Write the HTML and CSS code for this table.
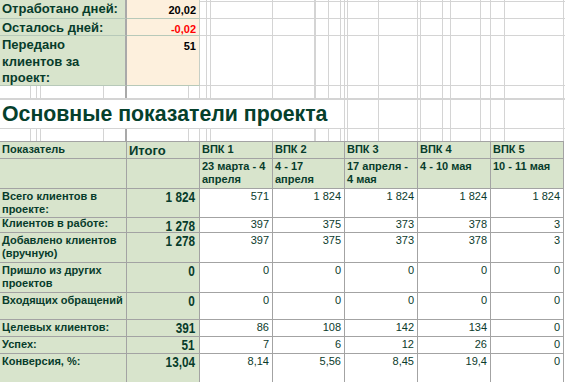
FILE: index.html
```html
<!DOCTYPE html>
<html lang="ru">
<head>
<meta charset="utf-8">
<title>Основные показатели проекта</title>
<link rel="stylesheet" href="styles.css">
</head>
<body>
<div class="sheet">
  <div class="top">
    <div class="lbl">Отработано дней:</div><div class="val">20,02</div>
    <div class="lbl">Осталось дней:</div><div class="val neg">-0,02</div>
    <div class="lbl multi">Передано<br>клиентов за<br>проект:</div><div class="val">51</div>
  </div>
  <div class="gap-a"></div>
  <h1 class="title">Основные показатели проекта</h1>
  <div class="gap-b"></div>
  <div class="tbl">
    <div class="c g">Показатель</div><div class="c g hd-total">Итого</div><div class="c g">ВПК 1</div><div class="c g">ВПК 2</div><div class="c g">ВПК 3</div><div class="c g">ВПК 4</div><div class="c g">ВПК 5</div>

    <div class="c g"></div><div class="c g"></div><div class="c g">23 марта - 4<br>апреля</div><div class="c g">4 - 17<br>апреля</div><div class="c g">17 апреля -<br>4 мая</div><div class="c g">4 - 10 мая</div><div class="c g">10 - 11 мая</div>

    <div class="c g">Всего клиентов в<br>проекте:</div><div class="c g t"><span>1 824</span></div><div class="c n">571</div><div class="c n">1 824</div><div class="c n">1 824</div><div class="c n">1 824</div><div class="c n">1 824</div>

    <div class="c g tight">Клиентов в работе:</div><div class="c g t"><span>1 278</span></div><div class="c n tight">397</div><div class="c n tight">375</div><div class="c n tight">373</div><div class="c n tight">378</div><div class="c n tight">3</div>

    <div class="c g">Добавлено клиентов<br>(вручную)</div><div class="c g t"><span>1 278</span></div><div class="c n">397</div><div class="c n">375</div><div class="c n">373</div><div class="c n">378</div><div class="c n">3</div>

    <div class="c g">Пришло из других<br>проектов</div><div class="c g t"><span>0</span></div><div class="c n">0</div><div class="c n">0</div><div class="c n">0</div><div class="c n">0</div><div class="c n">0</div>

    <div class="c g">Входящих обращений</div><div class="c g t"><span>0</span></div><div class="c n">0</div><div class="c n">0</div><div class="c n">0</div><div class="c n">0</div><div class="c n">0</div>

    <div class="c g">Целевых клиентов:</div><div class="c g t"><span>391</span></div><div class="c n">86</div><div class="c n">108</div><div class="c n">142</div><div class="c n">134</div><div class="c n">0</div>

    <div class="c g">Успех:</div><div class="c g t"><span>51</span></div><div class="c n">7</div><div class="c n">6</div><div class="c n">12</div><div class="c n">26</div><div class="c n">0</div>

    <div class="c g">Конверсия, %:</div><div class="c g t"><span>13,04</span></div><div class="c n">8,14</div><div class="c n">5,56</div><div class="c n">8,45</div><div class="c n">19,4</div><div class="c n">0</div>
  </div>
</div>
</body>
</html>
```
FILE: styles.css
```css
html, body {
  margin: 0;
  padding: 0;
  background: #ffffff;
}

.sheet {
  --gl: linear-gradient(#d4d4d4, #d4d4d4);
  --gd: linear-gradient(#a9a9a9, #a9a9a9);
  width: 565px;
  height: 382px;
  overflow: hidden;
  font-family: "Liberation Sans", Arial, sans-serif;
  color: #073c2b;
  background:
    /* horizontal sheet gridlines */
    var(--gl) 0 1px / 100% 1px no-repeat,
    var(--gl) 0 18px / 100% 1px no-repeat,
    var(--gl) 0 35px / 100% 1px no-repeat,
    var(--gl) 0 85px / 100% 1px no-repeat,
    var(--gl) 0 98px / 100% 2px no-repeat,
    var(--gl) 0 128px / 100% 1px no-repeat,
    /* vertical sheet gridlines */
    var(--gl) 30px 0 / 1px 100% no-repeat,
    var(--gl) 36px 0 / 1px 100% no-repeat,
    var(--gl) 40px 0 / 1px 100% no-repeat,
    var(--gl) 103px 0 / 1px 100% no-repeat,
    var(--gd) 125px 0 / 2px 100% no-repeat,
    var(--gl) 188px 0 / 1px 100% no-repeat,
    var(--gl) 199px 0 / 1px 100% no-repeat,
    var(--gl) 206px 0 / 1px 100% no-repeat,
    var(--gl) 210px 0 / 1px 100% no-repeat,
    var(--gl) 272px 0 / 1px 100% no-repeat,
    var(--gl) 314px 0 / 2px 100% no-repeat,
    var(--gl) 328px 0 / 1px 100% no-repeat,
    var(--gl) 340px 0 / 1px 100% no-repeat,
    var(--gl) 344px 0 / 1px 100% no-repeat,
    var(--gl) 347px 0 / 1px 100% no-repeat,
    var(--gl) 378px 0 / 1px 100% no-repeat,
    var(--gl) 417px 0 / 1px 100% no-repeat,
    var(--gl) 420px 0 / 1px 100% no-repeat,
    var(--gl) 442px 0 / 1px 100% no-repeat,
    var(--gl) 450px 0 / 1px 100% no-repeat,
    var(--gl) 480px 0 / 1px 100% no-repeat,
    var(--gl) 490px 0 / 1px 100% no-repeat,
    var(--gl) 504px 0 / 1px 100% no-repeat,
    var(--gl) 563px 0 / 1px 100% no-repeat,
    #ffffff;
}

/* ---------- top summary block ---------- */
.top {
  display: grid;
  grid-template-columns: 127px 73px;
  grid-template-rows: 19px 17px 50px;
  width: 200px;
}

.top .lbl {
  box-sizing: border-box;
  background: #d8e4cc;
  border-right: 2px solid #a9a9a9;
  border-bottom: 1px solid #b7c9b9;
  padding: 1px 0 0 2px;
  font-weight: bold;
  font-size: 13px;
  line-height: 16px;
  white-space: nowrap;
}

.top .lbl.multi {
  line-height: 16.5px;
}

.top .val {
  box-sizing: border-box;
  background: #fdf0dd;
  border-right: 1px solid #c6cfc6;
  border-bottom: 1px solid #b7c9b9;
  padding: 3px 3px 0 0;
  text-align: right;
  font-weight: bold;
  font-size: 11px;
  line-height: 14px;
  color: #000000;
}

.top .val.neg {
  color: #ff0000;
}

.gap-a {
  height: 14px;
}

.title {
  margin: 0;
  width: 343px;
  height: 28px;
  background: #ffffff;
  padding-left: 2px;
  box-sizing: border-box;
  font-size: 21.3px;
  line-height: 28px;
  font-weight: bold;
  white-space: nowrap;
  color: #05402c;
}

.gap-b {
  height: 13px;
}

/* ---------- main table ---------- */
.tbl {
  display: grid;
  grid-template-columns: 127px 73px 73px 72px 73px 73px 73px;
  grid-template-rows: 17px 30px 29px 15px 30px 30px 27px 17px 17px 40px;
  width: 564px;
  border-top: 1px solid #a3a3a3;
  background: #ffffff;
}

.c {
  box-sizing: border-box;
  border-right: 1px solid #a3a3a3;
  border-bottom: 1px solid #a3a3a3;
  padding: 1px 2px 0 2px;
  font-size: 11px;
  line-height: 13px;
  font-weight: bold;
  white-space: nowrap;
  background: #ffffff;
}

.g {
  background: #d8e4cc;
}

.hd-total {
  font-size: 13px;
  line-height: 14px;
  padding-top: 2px;
}

.n {
  font-weight: normal;
  text-align: right;
  padding-right: 3px;
  color: #0b3b2c;
}

.t {
  font-size: 14px;
  line-height: 14px;
  text-align: right;
  padding: 1px 4px 0 0;
}

.t span {
  display: inline-block;
  transform: scaleX(0.84);
  transform-origin: right center;
}

.c.tight {
  line-height: 10px;
  padding-top: 0;
}

.n.tight {
  line-height: 12px;
}
```
